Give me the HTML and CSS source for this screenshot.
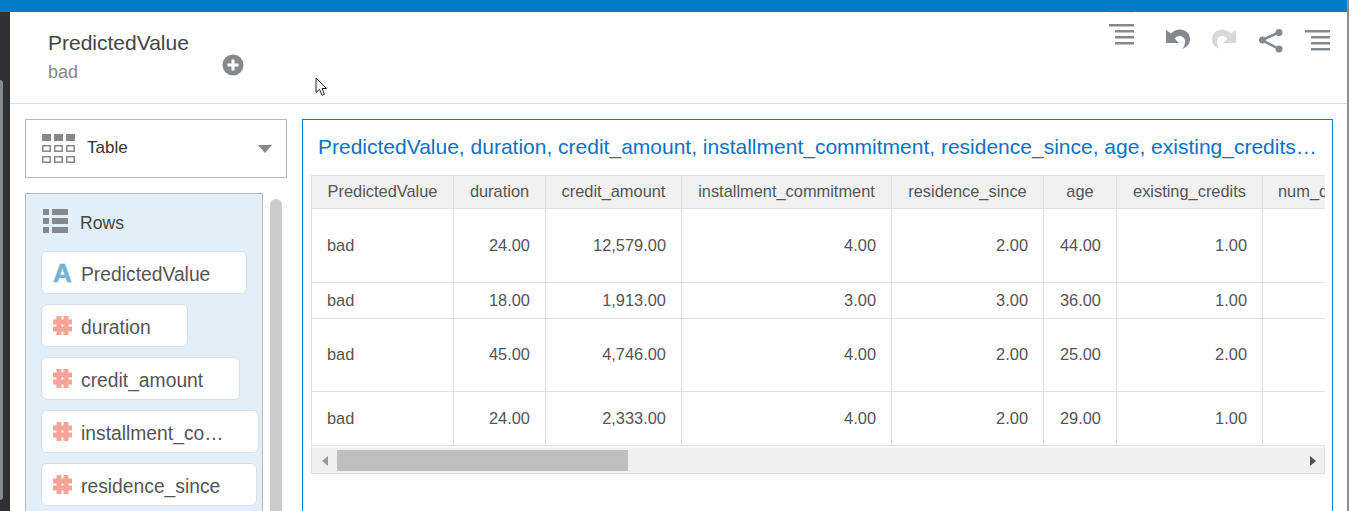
FILE: index.html
```html
<!DOCTYPE html>
<html lang="en">
<head>
    <meta charset="UTF-8">
    <meta name="viewport" content="width=device-width, initial-scale=1.0">
    <title>PredictedValue</title>
    <link rel="stylesheet" href="styles.css">
</head>
<body>
    <div class="app">
        <div class="topbar"></div>
        <div class="workspace">
            <div class="strip"><div class="strip-tab"></div></div>
            <div class="main">
                <header class="header">
                    <div class="heading">
                        <div class="heading-title">PredictedValue</div>
                        <div class="heading-sub">bad</div>
                    </div>
                    <svg class="add-icon" width="22" height="22" viewBox="0 0 22 22">
                        <circle cx="11" cy="11" r="10.500" fill="#85888d"/>
                        <path d="M11 5.500v11M5.500 11h11" stroke="#fff" stroke-width="3"/>
                    </svg>
                    <div class="toolbar">
                        <div class="tool-raised">
                            <div class="tool-shadow"></div>
                            <svg class="tool-raised-icon" width="25" height="21" viewBox="0 0 25 21">
                                <path d="M0 1.300h25M6 7.300h19M6 13.300h19M6 19.300h19" stroke="#85888d" stroke-width="2.600"/>
                            </svg>
                        </div>
                        <svg class="tool tool-undo" width="24" height="20" viewBox="0 0 24 20">
                            <path fill="#85888d" d="M0 1V14H13L8.500 9.500C11 6.500 15 6 17.500 8.500C20 11 19.500 15.500 16.500 20C22 17.500 24 14 24 10.500C24 4.500 19.500 0.500 14 0.500C10.500 0.500 7.500 2 5 4.500Z"/>
                        </svg>
                        <svg class="tool tool-redo" width="24" height="20" viewBox="0 0 24 20">
                            <path fill="#d8d9db" d="M24 1V14H11L15.500 9.500C13 6.500 9 6 6.500 8.500C4 11 4.500 15.500 7.500 20C2 17.500 0 14 0 10.500C0 4.500 4.500 0.500 10 0.500C13.500 0.500 16.500 2 19 4.500Z"/>
                        </svg>
                        <svg class="tool tool-share" width="24" height="24" viewBox="0 0 24 24">
                            <path d="M20 3.500L3 11L20 20" fill="none" stroke="#85888d" stroke-width="2.500"/>
                            <circle cx="20" cy="3.500" r="3.500" fill="#85888d"/>
                            <circle cx="3.500" cy="11" r="3.500" fill="#85888d"/>
                            <circle cx="20" cy="20" r="3.500" fill="#85888d"/>
                        </svg>
                        <svg class="tool tool-menu" width="25" height="21" viewBox="0 0 25 21">
                            <path d="M0 1.300h25M6 7.300h19M6 13.300h19M6 19.300h19" stroke="#85888d" stroke-width="2.600"/>
                        </svg>
                    </div>
                </header>

                <div class="body">
                    <aside class="side">
                        <div class="picker">
                            <svg class="picker-icon" width="33" height="29" viewBox="0 0 33 29">
                                <path fill="#85888d" d="M0 0h9v7H0zM12 0h9v7h-9zM24 0h9v7h-9z"/>
                                <path fill="none" stroke="#85888d" stroke-width="1.500" d="M.750 11.750h7.500v5.500H.750zM12.750 11.750h7.500v5.500h-7.500zM24.750 11.750h7.500v5.500h-7.500zM.750 22.750h7.500v5.500H.750zM12.750 22.750h7.500v5.500h-7.500zM24.750 22.750h7.500v5.500h-7.500z"/>
                            </svg>
                            <span class="picker-label">Table</span>
                            <span class="picker-arrow"></span>
                        </div>
                        <div class="side-lower">
                            <div class="rows-panel">
                                <div class="rows-head">
                                    <svg width="25" height="24" viewBox="0 0 25 24">
                                        <path fill="#85888d" d="M0 0h6v6H0zM9 0h16v6H9zM0 9h6v6H0zM9 9h16v6H9zM0 18h6v6H0zM9 18h16v6H9z"/>
                                    </svg>
                                    <span>Rows</span>
                                </div>
                                <div class="pill"><span class="attr-icon">A</span><span class="pill-text">PredictedValue</span></div>
                                <div class="pill">
                                    <svg class="hash-icon" width="19" height="19" viewBox="0 0 19 19"><path d="M6 0v19M13 0v19M0 6h19M0 13h19" stroke="#f4a498" stroke-width="5"/></svg>
                                    <span class="pill-text">duration</span>
                                </div>
                                <div class="pill">
                                    <svg class="hash-icon" width="19" height="19" viewBox="0 0 19 19"><path d="M6 0v19M13 0v19M0 6h19M0 13h19" stroke="#f4a498" stroke-width="5"/></svg>
                                    <span class="pill-text">credit_amount</span>
                                </div>
                                <div class="pill pill-long">
                                    <svg class="hash-icon" width="19" height="19" viewBox="0 0 19 19"><path d="M6 0v19M13 0v19M0 6h19M0 13h19" stroke="#f4a498" stroke-width="5"/></svg>
                                    <span class="pill-text">installment_commitment</span>
                                </div>
                                <div class="pill">
                                    <svg class="hash-icon" width="19" height="19" viewBox="0 0 19 19"><path d="M6 0v19M13 0v19M0 6h19M0 13h19" stroke="#f4a498" stroke-width="5"/></svg>
                                    <span class="pill-text">residence_since</span>
                                </div>
                            </div>
                            <div class="side-scroll"></div>
                        </div>
                    </aside>

                    <section class="canvas">
                        <h2 class="canvas-title">PredictedValue, duration, credit_amount, installment_commitment, residence_since, age, existing_credits, num_dependents</h2>
                        <div class="grid-wrap">
                            <table class="grid">
                                <colgroup>
                                    <col class="c-pred"><col class="c-dur"><col class="c-credit"><col class="c-inst"><col class="c-res"><col class="c-age"><col class="c-exist"><col class="c-num">
                                </colgroup>
                                <thead>
                                    <tr>
                                        <th>PredictedValue</th><th>duration</th><th>credit_amount</th><th>installment_commitment</th><th>residence_since</th><th>age</th><th>existing_credits</th><th>num_dependents</th>
                                    </tr>
                                </thead>
                                <tbody>
                                    <tr class="row-a">
                                        <td class="txt">bad</td><td>24.00</td><td>12,579.00</td><td>4.00</td><td>2.00</td><td>44.00</td><td>1.00</td><td></td>
                                    </tr>
                                    <tr class="row-b">
                                        <td class="txt">bad</td><td>18.00</td><td>1,913.00</td><td>3.00</td><td>3.00</td><td>36.00</td><td>1.00</td><td></td>
                                    </tr>
                                    <tr class="row-c">
                                        <td class="txt">bad</td><td>45.00</td><td>4,746.00</td><td>4.00</td><td>2.00</td><td>25.00</td><td>2.00</td><td></td>
                                    </tr>
                                    <tr class="row-d">
                                        <td class="txt">bad</td><td>24.00</td><td>2,333.00</td><td>4.00</td><td>2.00</td><td>29.00</td><td>1.00</td><td></td>
                                    </tr>
                                </tbody>
                            </table>
                        </div>
                        <div class="hscroll">
                            <span class="arrow-left"></span>
                            <div class="hscroll-thumb"></div>
                            <span class="arrow-right"></span>
                        </div>
                    </section>
                </div>
            </div>
        </div>
    </div>
    <div class="edge"></div>

    <svg class="cursor" width="15" height="20" viewBox="0 0 15 20">
        <path d="M1 1v14.500l3.500-3.200 2.500 6 2.500-1-2.500-5.800h4.500z" fill="#fff" stroke="#222" stroke-width="1"/>
    </svg>
</body>
</html>
```

FILE: styles.css
```css
html, body {
    margin: 0;
    height: 511px;
    overflow: hidden;
}

body {
    display: flex;
    font-family: "Liberation Sans", Arial, sans-serif;
    background: #fff;
    color: #555;
}

.app {
    width: 1347px;
    flex: none;
    display: flex;
    flex-direction: column;
}

.edge {
    flex: 1;
    background: #fff;
    border-left: 2px solid #8f8f8f;
}

.topbar {
    height: 12px;
    flex: none;
    background: #007cc8;
}

.workspace {
    flex: 1;
    display: flex;
    min-height: 0;
}

.strip {
    width: 10px;
    flex: none;
    background: #2f3033;
    padding-top: 68px;
    box-sizing: border-box;
}

.strip-tab {
    width: 3px;
    height: 420px;
    background: #868b8f;
    border-radius: 0 3px 3px 0;
}

.main {
    flex: 1;
    min-width: 0;
    display: flex;
    flex-direction: column;
}

/* header */
.header {
    height: 92px;
    box-sizing: border-box;
    flex: none;
    display: flex;
    border-bottom: 1px solid #d6dde4;
}

.heading {
    margin-left: 38px;
    padding-top: 19px;
    width: 174px;
}

.heading-title {
    font-size: 21px;
    line-height: 24px;
    color: #444;
}

.heading-sub {
    font-size: 18px;
    line-height: 22px;
    margin-top: 6px;
    color: #888;
}

.add-icon {
    margin-top: 42px;
}

.toolbar {
    margin-left: auto;
    margin-right: 17px;
    display: flex;
    align-items: flex-start;
}

.tool {
    flex: none;
    margin-top: 17px;
}

.tool-shadow {
    width: 25px;
    height: 1px;
    background: #eee;
}

.tool-raised-icon {
    display: block;
    margin-top: 11px;
}

.tool-undo {
    margin-left: 32px;
}

.tool-redo {
    margin-left: 22px;
}

.tool-share {
    margin-left: 23px;
}

.tool-menu {
    margin-left: 22px;
    margin-top: 18px;
}

/* left side */
.body {
    flex: 1;
    display: flex;
    min-height: 0;
}

.side {
    width: 262px;
    margin: 15px 0 0 15px;
    flex: none;
}

.picker {
    height: 59px;
    box-sizing: border-box;
    border: 1px solid #b5b9bd;
    display: flex;
    align-items: center;
    padding-left: 16px;
}

.picker-label {
    font-size: 17px;
    margin-left: 12px;
    padding-bottom: 2px;
    color: #333;
}

.picker-arrow {
    margin-left: auto;
    margin-right: 14px;
    border-left: 7px solid transparent;
    border-right: 7px solid transparent;
    border-top: 8px solid #85888d;
}

.side-lower {
    display: flex;
    margin-top: 15px;
}

.rows-panel {
    width: 238px;
    height: 330px;
    box-sizing: border-box;
    flex: none;
    background: #e2eff9;
    border: 1px solid #afb7bf;
    padding: 15px 0 0 15px;
}

.rows-head {
    display: flex;
    align-items: center;
    height: 24px;
    margin-left: 2px;
    margin-bottom: 18px;
    font-size: 17.600px;
    color: #444;
}

.rows-head span {
    margin-left: 12px;
    padding-top: 5px;
}

.pill {
    display: flex;
    align-items: center;
    width: fit-content;
    height: 43px;
    box-sizing: border-box;
    background: #fff;
    border: 1px solid #d3e0ec;
    border-radius: 6px;
    padding: 0 36px 0 11px;
    margin-bottom: 10px;
    font-size: 19.300px;
    color: #555;
}

.pill-long {
    padding-right: 34px;
}

.attr-icon {
    width: 19px;
    margin-right: 9px;
    text-align: center;
    font-size: 26px;
    line-height: 26px;
    font-weight: bold;
    color: #7ab0d2;
    -webkit-text-stroke: 0.6px #7ab0d2;
}

.hash-icon {
    margin-right: 9px;
    flex: none;
}

.pill-text {
    max-width: 143px;
    padding-top: 4px;
    overflow: hidden;
    white-space: nowrap;
    text-overflow: ellipsis;
}

.side-scroll {
    width: 12px;
    height: 330px;
    margin: 6px 0 0 7px;
    background: #ccc;
    border-radius: 6px 6px 0 0;
}

/* visualization */
.canvas {
    width: 1031px;
    height: 420px;
    box-sizing: border-box;
    margin: 15px 0 0 15px;
    border: 1px solid #0a7bd0;
    padding: 0 8px;
    flex: none;
}

.canvas-title {
    margin: 0;
    height: 55px;
    line-height: 54px;
    padding-left: 7px;
    padding-right: 5px;
    font-size: 21px;
    font-weight: normal;
    color: #0a72c8;
    white-space: nowrap;
    overflow: hidden;
    text-overflow: ellipsis;
}

.grid-wrap {
    width: 1014px;
    overflow: hidden;
}

.grid {
    table-layout: fixed;
    width: 1101px;
    border-collapse: collapse;
    font-size: 16.400px;
    color: #555;
}

.c-pred { width: 142px; }
.c-dur { width: 92px; }
.c-credit { width: 136px; }
.c-inst { width: 210px; }
.c-res { width: 152px; }
.c-age { width: 73px; }
.c-exist { width: 146px; }
.c-num { width: 150px; }

.grid th,
.grid td {
    border: 1px solid #e0e0e0;
    padding: 0 15px;
    white-space: nowrap;
    overflow: hidden;
}

.grid th {
    height: 30px;
    padding-bottom: 2px;
    background: #f1f1f1;
    font-weight: normal;
    text-align: center;
}

.grid td {
    text-align: right;
}

.grid td.txt {
    text-align: left;
}

.row-a td { height: 73px; }
.row-b td { height: 35px; }
.row-c td { height: 70px; padding-bottom: 2px; }
.row-d td { height: 53px; }

.hscroll {
    width: 1014px;
    height: 28px;
    box-sizing: border-box;
    background: #f0f0f0;
    border-bottom: 1px solid #e0e0e0;
    border-left: 1px solid #e0e0e0;
    border-right: 1px solid #e0e0e0;
    border-top: 2px solid #fafafa;
    display: flex;
    align-items: center;
}

.hscroll-thumb {
    width: 291px;
    height: 21px;
    margin-left: 9px;
    background: #bfbfbf;
}

.arrow-left {
    margin-left: 10px;
    border-top: 5px solid transparent;
    border-bottom: 5px solid transparent;
    border-right: 6px solid #999;
}

.arrow-right {
    margin-left: auto;
    margin-right: 8px;
    border-top: 5px solid transparent;
    border-bottom: 5px solid transparent;
    border-left: 6px solid #505050;
}

/* mouse pointer in the capture */
.cursor {
    position: absolute;
    left: 315px;
    top: 77px;
}
```
